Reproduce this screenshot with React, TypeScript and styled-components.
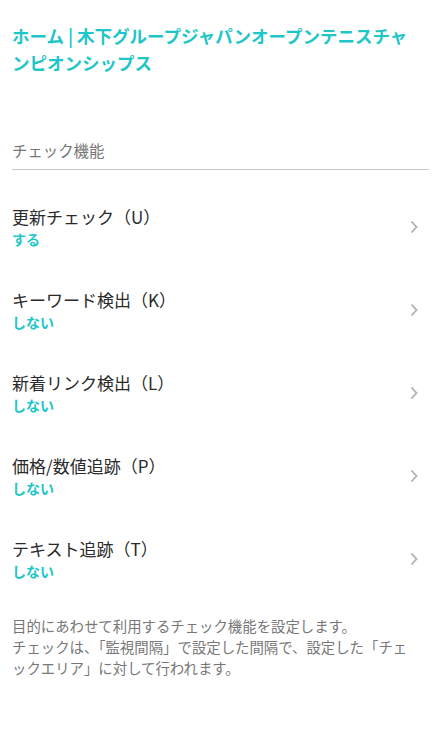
import React from 'react';
import styled, { createGlobalStyle } from 'styled-components';

const accent = '#1fc6c8';

const GlobalStyle = createGlobalStyle`
    html, body {
        margin: 0;
        padding: 0;
        background: #ffffff;
    }
    body {
        font-family: "Noto Sans CJK JP", "Noto Sans", sans-serif;
        color: #222;
    }
`;

const Page = styled.main`
    padding: 23px 17px 40px 12px;
`;

const Title = styled.h1`
    margin: 0;
    padding-right: 10px;
    font-size: 17.5px;
    line-height: 26.5px;
    font-weight: 700;
    color: ${accent};
`;

const SectionLabel = styled.h2`
    margin: 63px 0 0;
    padding-bottom: 8px;
    border-bottom: 1px solid #c8c8c8;
    font-size: 15.4px;
    line-height: 22px;
    font-weight: 400;
    color: #777;
`;

const List = styled.ul`
    list-style: none;
    margin: 0;
    padding: 35px 0 0;
    display: grid;
    gap: 39px;
`;

const Row = styled.li`
    display: flex;
    align-items: center;
    justify-content: space-between;
    cursor: pointer;
`;

const RowText = styled.div`
    display: flex;
    flex-direction: column;
`;

const RowTitle = styled.span`
    font-size: 17px;
    line-height: 24px;
    color: #2a2a2a;
`;

const RowValue = styled.span`
    font-size: 14px;
    line-height: 20px;
    font-weight: 700;
    color: ${accent};
`;

const Chevron = styled.svg`
    width: 8px;
    height: 14px;
    margin-right: 11px;
    flex-shrink: 0;
`;

const Note = styled.p`
    margin: 34px 0 0;
    padding-right: 8px;
    font-size: 14.4px;
    line-height: 21px;
    color: #777;
    line-break: anywhere;
`;

const checks = [
    { title: '更新チェック（U）', value: 'する' },
    { title: 'キーワード検出（K）', value: 'しない' },
    { title: '新着リンク検出（L）', value: 'しない' },
    { title: '価格/数値追跡（P）', value: 'しない' },
    { title: 'テキスト追跡（T）', value: 'しない' },
];

export default function App() {
    return (
        <>
            <GlobalStyle />
            <Page>
                <Title>ホーム | 木下グループジャパンオープンテニスチャンピオンシップス</Title>
                <SectionLabel>チェック機能</SectionLabel>
                <List>
                    {checks.map((c) => (
                        <Row key={c.title}>
                            <RowText>
                                <RowTitle>{c.title}</RowTitle>
                                <RowValue>{c.value}</RowValue>
                            </RowText>
                            <Chevron viewBox="0 0 8 14">
                                <path d="M1.5 1.5 L6.5 7 L1.5 12.5" fill="none" stroke="#b0b0b0" strokeWidth="1.8" />
                            </Chevron>
                        </Row>
                    ))}
                </List>
                <Note>
                    目的にあわせて利用するチェック機能を設定します。
                    <br />
                    チェックは、「監視間隔」で設定した間隔で、設定した「チェックエリア」に対して行われます。
                </Note>
            </Page>
        </>
    );
}
